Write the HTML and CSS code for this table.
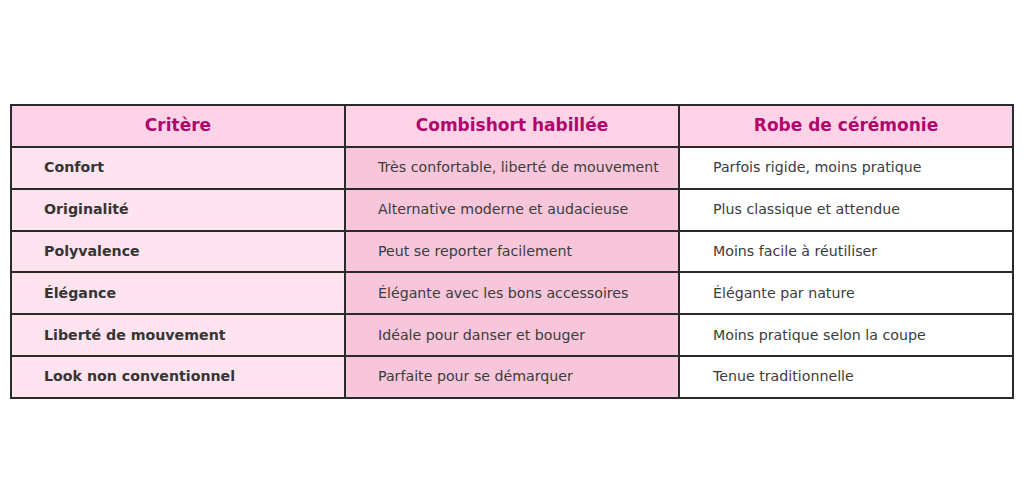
FILE: index.html
```html
<!DOCTYPE html>
<html lang="fr">
<head>
<meta charset="utf-8">
<link rel="stylesheet" href="styles.css">
</head>
<body>
<div class="wrap">
<table class="cmp">
<thead>
<tr><th>Critère</th><th>Combishort habillée</th><th>Robe de cérémonie</th></tr>
</thead>
<tbody>
<tr><td>Confort</td><td>Très confortable, liberté de mouvement</td><td>Parfois rigide, moins pratique</td></tr>
<tr><td>Originalité</td><td>Alternative moderne et audacieuse</td><td>Plus classique et attendue</td></tr>
<tr><td>Polyvalence</td><td>Peut se reporter facilement</td><td>Moins facile à réutiliser</td></tr>
<tr><td>Élégance</td><td>Élégante avec les bons accessoires</td><td>Élégante par nature</td></tr>
<tr><td>Liberté de mouvement</td><td>Idéale pour danser et bouger</td><td>Moins pratique selon la coupe</td></tr>
<tr><td>Look non conventionnel</td><td>Parfaite pour se démarquer</td><td>Tenue traditionnelle</td></tr>
</tbody>
</table>
</div>
</body>
</html>
```
FILE: styles.css
```css
html, body {
  margin: 0;
  padding: 0;
  background: #ffffff;
}
.wrap {
  padding: 104px 10px 0 10px;
}
.cmp {
  width: 1004px;
  border-collapse: collapse;
  table-layout: fixed;
  font-family: "DejaVu Sans", sans-serif;
}
.cmp th, .cmp td {
  border: 2px solid #2a2a2a;
  height: 41.8px;
  padding: 0 0 1px 32px;
  box-sizing: border-box;
  vertical-align: middle;
}
.cmp th {
  background: #ffd3e7;
  color: #b0076d;
  font-size: 17px;
  font-weight: bold;
  text-align: center;
  height: 42px;
  padding: 0 0 2px 0;
}
.cmp td {
  font-size: 14.2px;
  color: #3c3c3c;
  text-align: left;
}
.cmp td:nth-child(1) {
  background: #ffe4ef;
  font-weight: bold;
  color: #353535;
}
.cmp td:nth-child(2) {
  background: #f8c6da;
}
.cmp td:nth-child(3) {
  background: #ffffff;
  padding-left: 33px;
}
```
